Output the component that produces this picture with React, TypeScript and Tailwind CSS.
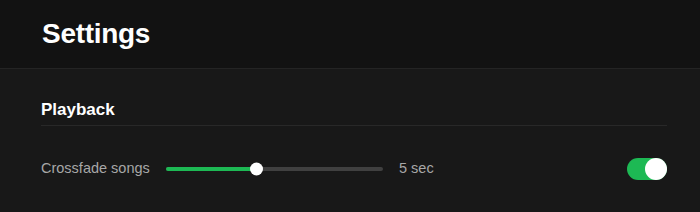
export default function App() {
  return (
    <div
      className="h-[212px] w-[700px] overflow-hidden bg-[#181818]"
      style={{ fontFamily: '"Liberation Sans", Arial, sans-serif' }}
    >
      <header className="flex h-[69px] items-center border-b border-[#242424] bg-[#121212] px-[42px]">
        <h1 className="pb-[1px] text-[28px] font-bold tracking-[-0.3px] text-white">Settings</h1>
      </header>
      <section className="px-[41px] pr-[33px] pt-[31px]">
        <h2 className="border-b border-[#282828] pb-[5px] text-[17px] font-bold leading-[20px] text-white">
          Playback
        </h2>
        <div className="mt-[32px] flex items-center">
          <span className="w-[125px] text-[14.5px] text-[#a7a7a7]">Crossfade songs</span>
          <div className="relative h-[4px] w-[217px] rounded-full bg-[#404040]">
            <div className="h-full w-[90px] rounded-full bg-[#1db954]" />
            <div className="absolute left-[84px] top-1/2 h-[13px] w-[13px] -translate-y-1/2 rounded-full bg-white" />
          </div>
          <span className="ml-[16px] text-[14.5px] text-[#a7a7a7]">5 sec</span>
          <div className="ml-auto flex h-[22px] w-[40px] items-center justify-end rounded-full bg-[#1db954]">
            <div className="h-[22px] w-[22px] rounded-full bg-white" />
          </div>
        </div>
      </section>
    </div>
  );
}
